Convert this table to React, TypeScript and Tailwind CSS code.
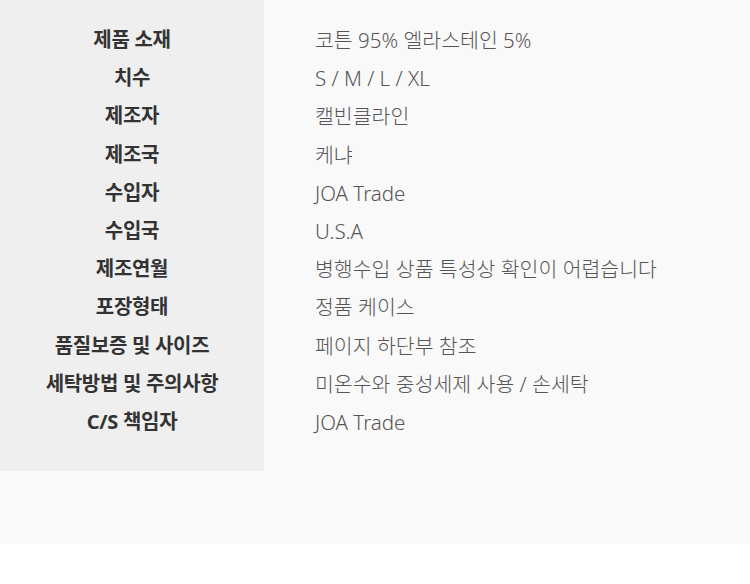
import React from "react";

const rows: [string, string][] = [
  ["제품 소재", "코튼 95% 엘라스테인 5%"],
  ["치수", "S / M / L / XL"],
  ["제조자", "캘빈클라인"],
  ["제조국", "케냐"],
  ["수입자", "JOA Trade"],
  ["수입국", "U.S.A"],
  ["제조연월", "병행수입 상품 특성상 확인이 어렵습니다"],
  ["포장형태", "정품 케이스"],
  ["품질보증 및 사이즈", "페이지 하단부 참조"],
  ["세탁방법 및 주의사항", "미온수와 중성세제 사용 / 손세탁"],
  ["C/S 책임자", "JOA Trade"],
];

export default function App() {
  return (
    <div
      className="w-[750px] h-[584px] bg-white"
      style={{ fontFamily: '"Noto Sans", "Noto Sans CJK KR", sans-serif' }}
    >
      <div className="h-[544px] bg-[#f9f9f9]">
        <div className="flex">
          <div className="w-[264px] h-[471px] bg-[#efefef] pt-[21px]">
            {rows.map(([k]) => (
              <div
                key={k}
                className="h-[38.2px] leading-[38.2px] text-center text-[20px] font-bold text-[#333] tracking-[-0.3px]"
              >
                {k}
              </div>
            ))}
          </div>
          <div className="flex-1 pl-[51px] pt-[21px]">
            {rows.map(([k, v]) => (
              <div
                key={k}
                className="h-[38.2px] leading-[38.2px] text-[20.5px] font-light text-[#555]"
              >
                {v}
              </div>
            ))}
          </div>
        </div>
      </div>
    </div>
  );
}
